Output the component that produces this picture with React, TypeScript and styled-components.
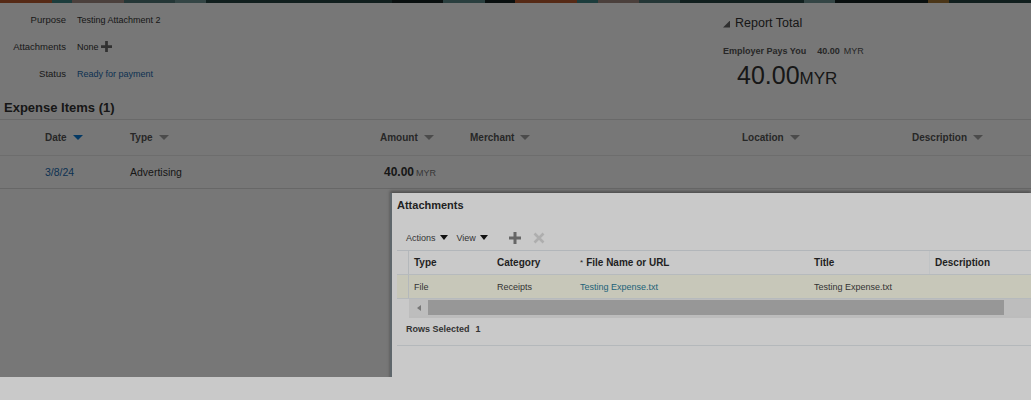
import React from "react";
import styled, { createGlobalStyle } from "styled-components";

const GlobalStyle = createGlobalStyle`
  html, body { margin: 0; padding: 0; background: #c9c9c9; }
  body { font-family: "Liberation Sans", Arial, sans-serif; }
  * { box-sizing: border-box; }
`;

const Viewport = styled.div`
  position: relative;
  height: 377px;
  overflow: hidden;
  background: #ffffff;
`;

const Banner = styled.div`
  height: 3px;
  background: linear-gradient(
    90deg,
    #b85a30 0 5%, #3c8080 5% 7%, #a08a80 7% 12%, #4e7474 12% 17%, #709494 17% 20%,
    #264440 20% 38%, #142220 38% 43%, #5a8888 43% 47%, #142220 47% 50%, #b85a30 50% 56%,
    #3c8080 56% 58%, #a08a80 58% 62%, #4e7474 62% 66%, #264440 66% 78%, #709494 78% 81%,
    #142220 81% 90%, #a07434 90% 92%, #264440 92% 100%
  );
`;

const Overlay = styled.div`
  position: absolute;
  inset: 0;
  background: rgba(0, 0, 0, 0.535);
  z-index: 1;
`;

const TopSection = styled.div`
  display: flex;
`;

const Form = styled.div`
  width: 723px;
  padding-top: 3px;
  display: grid;
  grid-template-columns: 66px 1fr;
  column-gap: 11px;
  grid-auto-rows: 27px;
  align-items: center;
`;

const Label = styled.div`
  text-align: right;
  font-size: 9.5px;
  color: #383838;
`;

const Value = styled.div<{ $link?: boolean }>`
  font-size: 9px;
  color: ${(p) => (p.$link ? "#1a6bb0" : "#333")};
  display: flex;
  align-items: center;
  gap: 2px;
`;

const Totals = styled.div`
  padding-top: 12px;
  color: #333;
`;

const TotalHead = styled.div`
  display: flex;
  align-items: center;
  gap: 5px;
  font-size: 12.5px;
  height: 16px;
`;

const Corner = styled.span`
  width: 7px;
  height: 7px;
  background: #666;
  clip-path: polygon(100% 0, 100% 100%, 0 100%);
  margin-top: 2px;
`;

const PaysRow = styled.div`
  margin-top: 15px;
  font-size: 9px;
  font-weight: bold;
  color: #555;
  display: flex;
  gap: 11px;
`;

const Small = styled.span`
  font-weight: normal;
  margin-left: 4px;
`;

const BigAmount = styled.div`
  margin: 5px 0 0 14px;
  font-size: 25px;
  color: #333;
  span { font-size: 17px; }
`;

const SectionTitle = styled.div`
  margin-top: 7px;
  padding-left: 4px;
  height: 23px;
  line-height: 22px;
  font-size: 13px;
  font-weight: bold;
  color: #333;
  border-bottom: 1px solid #e2e2e2;
`;

const TableRow = styled.div<{ $head?: boolean }>`
  display: grid;
  grid-template-columns: 85px 250px 90px 272px 170px 1fr;
  align-items: center;
  padding-left: 45px;
  height: ${(p) => (p.$head ? "36px" : "33px")};
  border-bottom: 1px solid ${(p) => (p.$head ? "#eaeaea" : "#dcdcdc")};
  font-size: ${(p) => (p.$head ? "10px" : "10.5px")};
  font-weight: ${(p) => (p.$head ? "bold" : "normal")};
  color: ${(p) => (p.$head ? "#555" : "#333")};
`;

const HeadCell = styled.div`
  display: flex;
  align-items: center;
  gap: 6px;
`;

const Caret = styled.span<{ $active?: boolean }>`
  width: 0;
  height: 0;
  border-left: 5px solid transparent;
  border-right: 5px solid transparent;
  border-top: 5px solid ${(p) => (p.$active ? "#0a7ad6" : "#a0a0a0")};
`;

const Cell = styled.div<{ $link?: boolean }>`
  color: ${(p) => (p.$link ? "#1a6bb0" : "inherit")};
`;

const Amount = styled.div`
  padding-left: 4px;
  font-weight: bold;
  font-size: 12px;
  span { font-weight: normal; font-size: 9px; color: #777; margin-left: 2px; }
`;

const Dialog = styled.div`
  position: absolute;
  left: 390px;
  top: 193px;
  right: 0;
  height: 220px;
  background: #c9c9c9;
  border-left: 2px solid #5f676c;
  box-shadow: 0 -2px 3px rgba(0, 0, 0, 0.35);
  z-index: 2;
  padding-left: 5px;
`;

const DialogTitle = styled.div`
  height: 25px;
  line-height: 25px;
  font-size: 11px;
  font-weight: bold;
  color: #222;
`;

const Toolbar = styled.div`
  height: 32px;
  display: flex;
  align-items: center;
  padding: 7px 0 0 9px;
  font-size: 9px;
  color: #333;
`;

const Menu = styled.div`
  display: flex;
  align-items: center;
  gap: 4px;
  margin-right: 9px;
`;

const DarkCaret = styled.span`
  width: 0;
  height: 0;
  border-left: 4px solid transparent;
  border-right: 4px solid transparent;
  border-top: 5px solid #111;
`;

const IconButton = styled.span`
  display: flex;
  margin-left: 12px;
`;

const Grid = styled.div`
  border-top: 1px solid #b2b6ba;
`;

const GridRow = styled.div<{ $head?: boolean }>`
  display: grid;
  grid-template-columns: 12px 83px 83px 234px 121px 1fr;
  height: 24px;
  background: ${(p) => (p.$head ? "transparent" : "#c7c7b9")};
  border-bottom: 1px solid #b6babd;
  font-size: ${(p) => (p.$head ? "10px" : "9px")};
  font-weight: ${(p) => (p.$head ? "bold" : "normal")};
  color: ${(p) => (p.$head ? "#1f1f1f" : "#333")};
`;

const GridCell = styled.div<{ $link?: boolean; $sep?: boolean }>`
  display: flex;
  align-items: center;
  padding-left: 5px;
  color: ${(p) => (p.$link ? "#1c6278" : "inherit")};
  border-right: ${(p) => (p.$sep ? "1px solid #c0c3c5" : "none")};
  sup { font-size: 8px; margin-right: 3px; font-weight: normal; }
`;

const RowHeader = styled.div`
  border-right: 1px solid #b4b8bb;
`;

const ScrollBar = styled.div`
  margin-left: 12px;
  height: 19px;
  display: flex;
  align-items: center;
  background: #bdbdbd;
  border-bottom: 2px solid #bcbcbc;
`;

const Arrow = styled.span`
  width: 19px;
  display: flex;
  justify-content: center;
  &::before {
    content: "";
    border-top: 3px solid transparent;
    border-bottom: 3px solid transparent;
    border-right: 4px solid #777;
  }
`;

const Thumb = styled.div`
  width: 576px;
  height: 15px;
  background: #979797;
`;

const Footer = styled.div`
  height: 28px;
  padding: 6px 0 0 9px;
  font-size: 9px;
  font-weight: bold;
  color: #333;
  border-bottom: 1px solid #b4b8bb;
  span { margin-left: 6px; }
`;

const PlusIcon = ({ color, size }: { color: string; size: number }) => (
  <svg width={size} height={size} viewBox="0 0 12 12">
    <path d="M4.5 0h3v4.5H12v3H7.5V12h-3V7.5H0v-3h4.5z" fill={color} />
  </svg>
);

const CrossIcon = () => (
  <svg width="12" height="12" viewBox="0 0 12 12">
    <path d="M1.5 1.5l9 9M10.5 1.5l-9 9" stroke="#aeaeae" strokeWidth="2.6" />
  </svg>
);

export default function App() {
  return (
    <>
      <GlobalStyle />
      <Viewport>
        <Banner />
        <TopSection>
          <Form>
            <Label>Purpose</Label>
            <Value>Testing Attachment 2</Value>
            <Label>Attachments</Label>
            <Value>
              None <PlusIcon color="#6a6a6a" size={11} />
            </Value>
            <Label>Status</Label>
            <Value $link>Ready for payment</Value>
          </Form>
          <Totals>
            <TotalHead>
              <Corner />
              Report Total
            </TotalHead>
            <PaysRow>
              Employer Pays You
              <span>
                40.00<Small>MYR</Small>
              </span>
            </PaysRow>
            <BigAmount>
              40.00<span>MYR</span>
            </BigAmount>
          </Totals>
        </TopSection>
        <SectionTitle>Expense Items (1)</SectionTitle>
        <TableRow $head>
          <HeadCell>Date <Caret $active /></HeadCell>
          <HeadCell>Type <Caret /></HeadCell>
          <HeadCell>Amount <Caret /></HeadCell>
          <HeadCell>Merchant <Caret /></HeadCell>
          <HeadCell>Location <Caret /></HeadCell>
          <HeadCell>Description <Caret /></HeadCell>
        </TableRow>
        <TableRow>
          <Cell $link>3/8/24</Cell>
          <Cell>Advertising</Cell>
          <Amount>
            40.00<span>MYR</span>
          </Amount>
          <Cell />
          <Cell />
          <Cell />
        </TableRow>
        <Overlay />
        <Dialog>
          <DialogTitle>Attachments</DialogTitle>
          <Toolbar>
            <Menu>Actions <DarkCaret /></Menu>
            <Menu>View <DarkCaret /></Menu>
            <IconButton><PlusIcon color="#666" size={12} /></IconButton>
            <IconButton><CrossIcon /></IconButton>
          </Toolbar>
          <Grid>
            <GridRow $head>
              <RowHeader />
              <GridCell>Type</GridCell>
              <GridCell>Category</GridCell>
              <GridCell><sup>*</sup>File Name or URL</GridCell>
              <GridCell $sep>Title</GridCell>
              <GridCell>Description</GridCell>
            </GridRow>
            <GridRow>
              <RowHeader />
              <GridCell>File</GridCell>
              <GridCell>Receipts</GridCell>
              <GridCell $link>Testing Expense.txt</GridCell>
              <GridCell>Testing Expense.txt</GridCell>
              <GridCell />
            </GridRow>
            <ScrollBar>
              <Arrow />
              <Thumb />
            </ScrollBar>
          </Grid>
          <Footer>
            Rows Selected<span>1</span>
          </Footer>
        </Dialog>
      </Viewport>
    </>
  );
}
